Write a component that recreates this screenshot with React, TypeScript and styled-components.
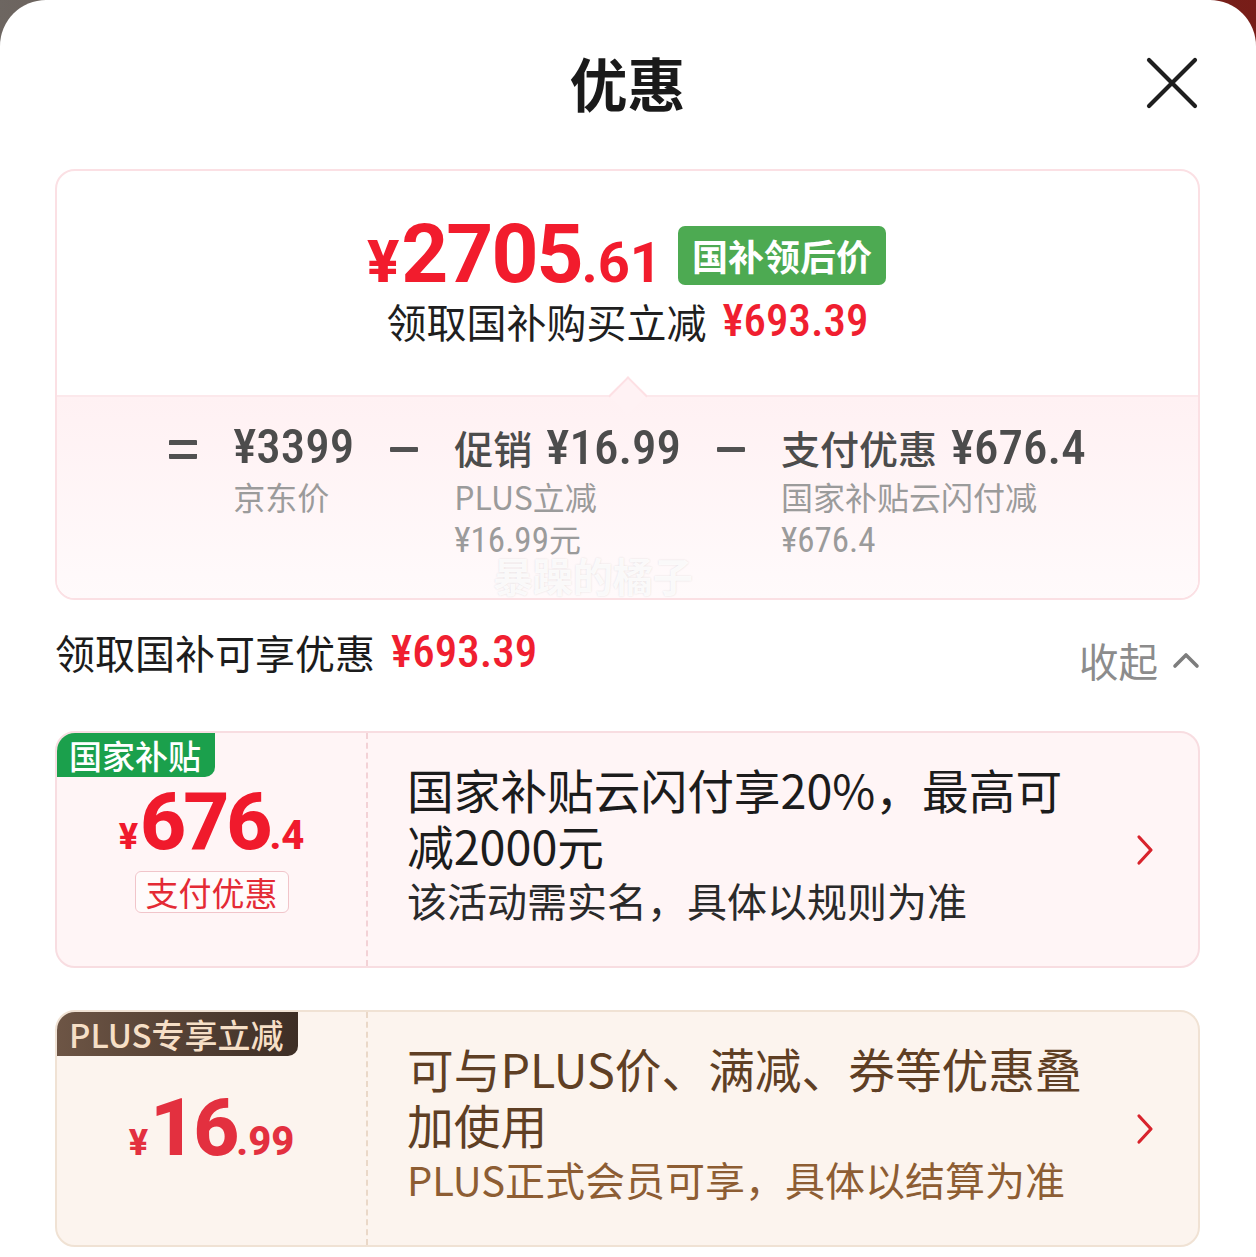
import React from 'react';
import styled, { createGlobalStyle } from 'styled-components';

const CJK = '"Noto Sans CJK SC", "Noto Sans", sans-serif';
const NUM = 'Roboto, "Noto Sans CJK SC", sans-serif';

const GlobalStyle = createGlobalStyle`
  html, body { margin: 0; padding: 0; }
  body {
    background: linear-gradient(90deg, #6d6661 0%, #5b3a30 45%, #781d18 100%);
    font-family: ${CJK};
    -webkit-font-smoothing: antialiased;
  }
  #root { min-height: 1257px; }
`;

const Sheet = styled.div`
  background: #fff;
  border-radius: 46px 46px 0 0;
  min-height: 1257px;
  padding: 0 56px 0 55px;
  box-sizing: border-box;
  overflow: hidden;
`;

const Header = styled.header`
  display: grid;
  grid-template-columns: 1fr auto 1fr;
  align-items: center;
  height: 169px;
  box-sizing: border-box;
`;

const Title = styled.h1`
  grid-column: 2;
  margin: 0;
  font-family: ${CJK};
  font-size: 58px;
  font-weight: 700;
  color: #1a1a1a;
  line-height: 1;
  transform: translateY(-3px);
`;

const CloseButton = styled.button`
  grid-column: 3;
  justify-self: end;
  margin: 0 2px 0 0;
  padding: 0;
  border: 0;
  background: none;
  width: 52px;
  height: 52px;
  display: flex;
  transform: translateY(-2px);
`;

/* ---------- summary card ---------- */
const SummaryCard = styled.section`
  border: 2px solid #fbe0e4;
  border-radius: 20px;
  overflow: hidden;
  background: #fff;
`;

const SummaryTop = styled.div`
  display: flex;
  flex-direction: column;
  align-items: center;
  padding-top: 43px;
  height: 224px;
  box-sizing: border-box;
`;

const PriceRow = styled.div`
  display: flex;
  align-items: center;
  gap: 16px;
  height: 80px;
  margin-left: -2px;
`;

const BigPrice = styled.div`
  display: flex;
  align-items: baseline;
  color: #f21c2d;
  font-family: ${NUM};
  font-weight: 700;
  line-height: 1;
`;

const Yen = styled.span<{ $size: number }>`
  font-size: ${(p) => p.$size}px;
  font-weight: 800;
  margin-right: 2px;
`;

const PriceInt = styled.span<{ $size: number; $spacing?: number }>`
  font-size: ${(p) => p.$size}px;
  letter-spacing: ${(p) => p.$spacing ?? 0}px;
`;

const PriceDec = styled.span<{ $size: number }>`
  font-size: ${(p) => p.$size}px;
`;

const GreenBadge = styled.span`
  background: #4daa52;
  color: #fff;
  font-family: ${CJK};
  font-weight: 700;
  font-size: 36px;
  line-height: 59px;
  height: 59px;
  padding: 0 14px;
  border-radius: 7px;
  margin-top: 2px;
`;

const SubLine = styled.div`
  display: flex;
  align-items: center;
  gap: 16px;
  margin-top: 1px;
  font-size: 40px;
  color: #1f1f1f;
  line-height: 52px;
`;

const RedAmount = styled.span<{ $size?: number }>`
  font-family: ${NUM};
  font-stretch: 85%;
  font-size: ${(p) => p.$size ?? 45}px;
  font-weight: 500;
  color: #f01f30;
`;

const SummaryBottom = styled.div`
  position: relative;
  border-top: 2px solid #fce8eb;
  background: linear-gradient(180deg, #fff1f3 0%, #fffafb 100%);
  height: 203px;
  box-sizing: border-box;
  display: flex;
  justify-content: center;
  align-items: flex-start;
  gap: 36px;
  padding-top: 22px;

  &::before {
    content: '';
    position: absolute;
    left: 50%;
    top: -15px;
    width: 26px;
    height: 26px;
    transform: translateX(-50%) rotate(45deg);
    background: #fff2f4;
    border-left: 2px solid #fde0e4;
    border-top: 2px solid #fde0e4;
  }
`;

const Operator = styled.span<{ $double?: boolean }>`
  display: block;
  width: 28px;
  box-sizing: border-box;
  margin-top: ${(p) => (p.$double ? 21 : 28)}px;
  height: ${(p) => (p.$double ? 19 : 5)}px;
  background: ${(p) => (p.$double ? 'transparent' : '#515151')};
  border-top: ${(p) => (p.$double ? '5px solid #515151' : '0')};
  border-bottom: ${(p) => (p.$double ? '5px solid #515151' : '0')};
  border-radius: 1px;
`;

const Term = styled.div`
  display: flex;
  flex-direction: column;
`;

const TermMain = styled.div`
  display: flex;
  align-items: baseline;
  gap: 14px;
  height: 56px;
  line-height: 56px;
  color: #4c4c4c;
`;

const TermLabel = styled.span`
  font-family: ${CJK};
  font-size: 39px;
  font-weight: 500;
`;

const TermAmount = styled.span`
  font-family: ${NUM};
  font-stretch: 86%;
  font-size: 49px;
  font-weight: 500;
`;

const TermNote = styled.div`
  font-family: ${CJK};
  font-size: 32px;
  line-height: 42px;
  color: #9b9b9b;
`;

const NoteNum = styled.span`
  font-family: ${NUM};
  font-stretch: 85%;
  font-size: 35px;
`;

const Watermark = styled.div`
  position: absolute;
  left: 536px;
  bottom: 0;
  transform: translateX(-50%);
  font-family: ${CJK};
  font-size: 40px;
  line-height: 46px;
  font-weight: 700;
  color: rgba(255, 255, 255, 0.85);
  text-shadow: 0 0 2px rgba(0, 0, 0, 0.12);
  white-space: nowrap;
`;

/* ---------- section head ---------- */
const SectionHead = styled.div`
  display: flex;
  justify-content: space-between;
  align-items: flex-start;
  padding-top: 28px;
  height: 131px;
  box-sizing: border-box;
`;

const SectionTitle = styled.div`
  display: flex;
  align-items: center;
  gap: 16px;
  font-size: 40px;
  line-height: 48px;
  color: #1c1c1c;
`;

const Collapse = styled.div`
  display: flex;
  align-items: center;
  gap: 14px;
  margin-top: 8px;
  font-size: 39.5px;
  line-height: 48px;
  color: #8c8c8c;
`;

/* ---------- coupons ---------- */
type Tone = 'red' | 'gold';

const tones = {
  red: {
    bg: '#fff5f6',
    border: '#f8dde1',
    divider: '#f3d2d6',
    title: '#1c1c1c',
    sub: '#2a2a2a',
    price: '#f01a2c',
    badgeBg: '#1ba04c',
    badgeFg: '#ffffff',
  },
  gold: {
    bg: '#fcf4ee',
    border: '#f0e2d4',
    divider: '#ead8c8',
    title: '#5f3f24',
    sub: '#8d5d33',
    price: '#e3303f',
    badgeBg: 'linear-gradient(90deg, #6d5545 0%, #3d2e25 100%)',
    badgeFg: '#f6dfc6',
  },
};

const CouponList = styled.div`
  display: flex;
  flex-direction: column;
  gap: 42px;
`;

const Coupon = styled.div<{ $tone: Tone }>`
  position: relative;
  display: grid;
  grid-template-columns: 311px 1fr 68px;
  height: 237px;
  box-sizing: border-box;
  background: ${(p) => tones[p.$tone].bg};
  border: 2px solid ${(p) => tones[p.$tone].border};
  border-radius: 20px;
  overflow: hidden;
`;

const CouponBadge = styled.div<{ $tone: Tone }>`
  position: absolute;
  left: 0;
  top: 0;
  height: 44px;
  padding: 0 14px 0 12px;
  background: ${(p) => tones[p.$tone].badgeBg};
  color: ${(p) => tones[p.$tone].badgeFg};
  font-family: ${CJK};
  font-size: 33px;
  font-weight: 500;
  line-height: 44px;
  border-radius: 0 0 10px 0;
  white-space: nowrap;
`;

const CouponLeft = styled.div<{ $tone: Tone }>`
  display: flex;
  flex-direction: column;
  align-items: center;
  justify-content: center;
  gap: 12px;
  padding-bottom: 2px;
  border-right: 2px dashed ${(p) => tones[p.$tone].divider};
`;

const CouponPrice = styled.div<{ $tone: Tone }>`
  display: flex;
  align-items: baseline;
  color: ${(p) => tones[p.$tone].price};
  font-family: ${NUM};
  font-weight: 800;
  line-height: 74px;
  height: 74px;
`;

const PayTag = styled.span`
  font-family: ${CJK};
  font-size: 33px;
  line-height: 40px;
  color: #e42a35;
  padding: 0 10px;
  background: rgba(255, 255, 255, 0.6);
  border: 1.5px solid #f1c5ca;
  border-radius: 6px;
`;

const CouponBody = styled.div`
  display: flex;
  flex-direction: column;
  justify-content: center;
  padding-left: 39px;
  padding-bottom: 12px;
`;

const CouponTitle = styled.div<{ $tone: Tone }>`
  font-size: 46.7px;
  line-height: 56px;
  color: ${(p) => tones[p.$tone].title};
  max-width: 690px;
`;

const CouponSub = styled.div<{ $tone: Tone }>`
  font-size: 40px;
  line-height: 54px;
  color: ${(p) => tones[p.$tone].sub};
  white-space: nowrap;
`;

const ArrowCell = styled.div`
  display: flex;
  align-items: center;
  justify-content: flex-start;
  padding-left: 6px;
`;

const CloseIcon = () => (
  <svg width="52" height="52" viewBox="0 0 52 52" fill="none">
    <path d="M3 3 L49 49 M49 3 L3 49" stroke="#1e1e1e" strokeWidth="4.2" strokeLinecap="round" />
  </svg>
);

const ChevronUp = () => (
  <svg width="28" height="18" viewBox="0 0 28 18" fill="none">
    <path d="M3 15 L14 4 L25 15" stroke="#7d7d7d" strokeWidth="3.6" strokeLinecap="round" strokeLinejoin="round" />
  </svg>
);

const ChevronRight = () => (
  <svg width="18" height="32" viewBox="0 0 18 32" fill="none">
    <path d="M3 3 L15 16 L3 29" stroke="#d8232c" strokeWidth="3.2" strokeLinecap="round" strokeLinejoin="round" />
  </svg>
);

export default function App() {
  return (
    <>
      <GlobalStyle />
      <Sheet>
        <Header>
          <Title>优惠</Title>
          <CloseButton aria-label="关闭">
            <CloseIcon />
          </CloseButton>
        </Header>

        <SummaryCard>
          <SummaryTop>
            <PriceRow>
              <BigPrice>
                <Yen $size={60}>¥</Yen>
                <PriceInt $size={82} $spacing={-2}>2705</PriceInt>
                <PriceDec $size={56}>.61</PriceDec>
              </BigPrice>
              <GreenBadge>国补领后价</GreenBadge>
            </PriceRow>
            <SubLine>
              <span>领取国补购买立减</span>
              <RedAmount>¥693.39</RedAmount>
            </SubLine>
          </SummaryTop>
          <SummaryBottom>
            <Operator $double />
            <Term>
              <TermMain>
                <TermAmount>¥3399</TermAmount>
              </TermMain>
              <TermNote>京东价</TermNote>
            </Term>
            <Operator />
            <Term>
              <TermMain>
                <TermLabel>促销</TermLabel>
                <TermAmount>¥16.99</TermAmount>
              </TermMain>
              <TermNote>PLUS立减</TermNote>
              <TermNote>
                <NoteNum>¥16.99</NoteNum>元
              </TermNote>
            </Term>
            <Operator />
            <Term>
              <TermMain>
                <TermLabel>支付优惠</TermLabel>
                <TermAmount>¥676.4</TermAmount>
              </TermMain>
              <TermNote>国家补贴云闪付减</TermNote>
              <TermNote>
                <NoteNum>¥676.4</NoteNum>
              </TermNote>
            </Term>
            <Watermark>暴躁的橘子</Watermark>
          </SummaryBottom>
        </SummaryCard>

        <SectionHead>
          <SectionTitle>
            <span>领取国补可享优惠</span>
            <RedAmount>¥693.39</RedAmount>
          </SectionTitle>
          <Collapse>
            <span>收起</span>
            <ChevronUp />
          </Collapse>
        </SectionHead>

        <CouponList>
          <Coupon $tone="red">
            <CouponLeft $tone="red">
              <CouponPrice $tone="red">
                <Yen $size={36}>¥</Yen>
                <PriceInt $size={80} $spacing={-3}>676</PriceInt>
                <PriceDec $size={40}>.4</PriceDec>
              </CouponPrice>
              <PayTag>支付优惠</PayTag>
            </CouponLeft>
            <CouponBody>
              <CouponTitle $tone="red">国家补贴云闪付享20%，最高可减2000元</CouponTitle>
              <CouponSub $tone="red">该活动需实名，具体以规则为准</CouponSub>
            </CouponBody>
            <ArrowCell>
              <ChevronRight />
            </ArrowCell>
            <CouponBadge $tone="red">国家补贴</CouponBadge>
          </Coupon>

          <Coupon $tone="gold">
            <CouponLeft $tone="gold">
              <CouponPrice $tone="gold">
                <Yen $size={36}>¥</Yen>
                <PriceInt $size={80} $spacing={-3}>16</PriceInt>
                <PriceDec $size={40}>.99</PriceDec>
              </CouponPrice>
            </CouponLeft>
            <CouponBody>
              <CouponTitle $tone="gold">可与PLUS价、满减、券等优惠叠加使用</CouponTitle>
              <CouponSub $tone="gold">PLUS正式会员可享，具体以结算为准</CouponSub>
            </CouponBody>
            <ArrowCell>
              <ChevronRight />
            </ArrowCell>
            <CouponBadge $tone="gold">PLUS专享立减</CouponBadge>
          </Coupon>
        </CouponList>
      </Sheet>
    </>
  );
}
